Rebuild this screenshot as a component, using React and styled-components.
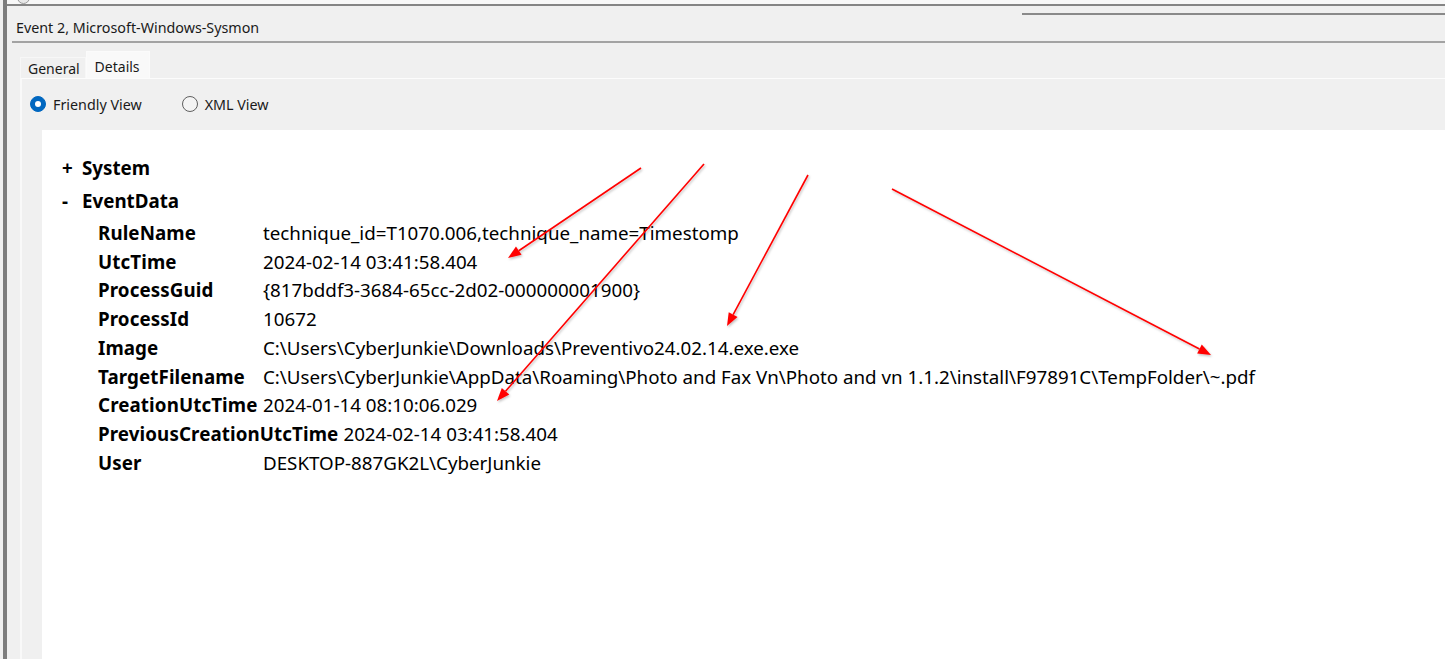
import React from "react";
import styled, { createGlobalStyle } from "styled-components";

const Global = createGlobalStyle`
  html, body { margin: 0; padding: 0; background: #f0f0f0; overflow: hidden; }
  * { box-sizing: border-box; }
`;

const Page = styled.div`
  position: relative;
  width: 1445px;
  height: 659px;
  padding-left: 3px;
  background: #f0f0f0;
  font-family: "Noto Sans", "Open Sans", sans-serif;
  color: #000;
`;

const Window = styled.div`
  height: 100%;
  display: flex;
  flex-direction: column;
  border-left: 4px solid #7d7d7d;
  background: #f0f0f0;
`;

const TopStrip = styled.div`
  height: 6px;
  background: #f8f8f8;
  border-bottom: 2px solid #858585;
  padding-left: 10px;
  overflow: hidden;
  flex: none;
`;

const CutCircle = styled.span`
  display: block;
  width: 13px;
  height: 13px;
  margin-top: -9px;
  border-radius: 50%;
  border: 1px solid #9a9a9a;
  background: #e8e8e8;
`;

const UpperRule = styled.div`
  height: 2px;
  margin: 7px 0 0 1015px;
  background: #8a8a8a;
  flex: none;
`;

const TitleBar = styled.div`
  height: 26px;
  padding: 4px 0 0 9px;
  font-size: 14.3px;
  line-height: 18px;
  color: #1a1a1a;
  flex: none;
`;

const TitleRule = styled.div`
  height: 2px;
  margin-left: 5px;
  background: #a3a3a3;
  flex: none;
`;

const TabStrip = styled.div`
  display: flex;
  align-items: flex-end;
  height: 35px;
  margin-left: 13px;
  flex: none;
`;

const Tab = styled.div`
  height: ${(p) => (p.$active ? "27px" : "21px")};
  padding: ${(p) => (p.$active ? "6px 9px 0 8px" : "2px 5px 0 7px")};
  background: ${(p) => (p.$active ? "#f9f9f9" : "#f0f0f0")};
  border: 1px solid ${(p) => (p.$active ? "#fbfbfb" : "#f7f7f7")};
  border-bottom: none;
  font-size: 14px;
  line-height: 18px;
  color: #1a1a1a;
`;

const TabPanel = styled.div`
  flex: 1;
  display: flex;
  flex-direction: column;
  margin-left: 13px;
  border-top: 1px solid #fcfcfc;
  border-left: 2px solid #f9f9f9;
  min-height: 0;
`;

const RadioRow = styled.div`
  display: flex;
  align-items: center;
  gap: 40px;
  height: 51px;
  padding: 0 0 1px 8px;
  flex: none;
`;

const RadioLabel = styled.label`
  display: flex;
  align-items: center;
  gap: 7px;
  font-size: 14.3px;
  color: #1a1a1a;
`;

const RadioDot = styled.span`
  width: 16px;
  height: 16px;
  border-radius: 50%;
  display: inline-flex;
  align-items: center;
  justify-content: center;
  background: ${(p) => (p.$checked ? "#0067c0" : "#f4f4f4")};
  border: 1px solid ${(p) => (p.$checked ? "#0067c0" : "#5f5f5f")};
  &::after {
    content: "";
    width: 6px;
    height: 6px;
    border-radius: 50%;
    background: #fff;
    display: ${(p) => (p.$checked ? "block" : "none")};
  }
`;

const Content = styled.div`
  flex: 1;
  margin-left: 20px;
  background: #ffffff;
  padding: 21px 0 0 20px;
  font-family: "Noto Sans", "Open Sans", sans-serif;
  font-size: 18.75px;
  min-height: 0;
`;

const Node = styled.div`
  display: flex;
  align-items: center;
  height: 33px;
  font-weight: 700;
`;

const Toggle = styled.span`
  width: 20px;
  font-weight: 700;
`;

const Rows = styled.div`
  padding-left: 36px;
  display: flex;
  flex-direction: column;
  padding-top: 1px;
`;

const Row = styled.div`
  display: flex;
  height: 28.75px;
  align-items: center;
  white-space: nowrap;
`;

const Key = styled.span`
  min-width: 160px;
  margin-right: 5px;
  font-weight: 700;
  letter-spacing: 0.1px;
`;

const Value = styled.span`
  font-weight: 400;
`;

const Overlay = styled.svg`
  position: absolute;
  left: 0;
  top: 0;
  pointer-events: none;
`;

const rows = [
  ["RuleName", "technique_id=T1070.006,technique_name=Timestomp"],
  ["UtcTime", "2024-02-14 03:41:58.404"],
  ["ProcessGuid", "{817bddf3-3684-65cc-2d02-000000001900}"],
  ["ProcessId", "10672"],
  ["Image", "C:\\Users\\CyberJunkie\\Downloads\\Preventivo24.02.14.exe.exe"],
  [
    "TargetFilename",
    "C:\\Users\\CyberJunkie\\AppData\\Roaming\\Photo and Fax Vn\\Photo and vn 1.1.2\\install\\F97891C\\TempFolder\\~.pdf",
  ],
  ["CreationUtcTime", "2024-01-14 08:10:06.029"],
  ["PreviousCreationUtcTime", "2024-02-14 03:41:58.404"],
  ["User", "DESKTOP-887GK2L\\CyberJunkie"],
];

const arrows = [
  [641, 168, 508, 258],
  [704, 164, 497, 401],
  [808, 175, 727, 326],
  [892, 189, 1211, 355],
];

function Arrow({ x1, y1, x2, y2 }) {
  const dx = x2 - x1;
  const dy = y2 - y1;
  const len = Math.hypot(dx, dy);
  const ux = dx / len;
  const uy = dy / len;
  const hl = 13;
  const hw = 5;
  const bx = x2 - ux * hl;
  const by = y2 - uy * hl;
  const p1 = `${bx - uy * hw},${by + ux * hw}`;
  const p2 = `${bx + uy * hw},${by - ux * hw}`;
  return (
    <g>
      <line x1={x1} y1={y1} x2={bx} y2={by} stroke="#ff0000" strokeWidth="1.6" />
      <polygon points={`${x2},${y2} ${p1} ${p2}`} fill="#ff0000" />
    </g>
  );
}

export default function App() {
  return (
    <>
      <Global />
      <Page>
        <Window>
          <TopStrip>
            <CutCircle />
          </TopStrip>
          <UpperRule />
          <TitleBar>Event 2, Microsoft-Windows-Sysmon</TitleBar>
          <TitleRule />
          <TabStrip>
            <Tab>General</Tab>
            <Tab $active>Details</Tab>
          </TabStrip>
          <TabPanel>
            <RadioRow>
              <RadioLabel>
                <RadioDot $checked />
                Friendly View
              </RadioLabel>
              <RadioLabel>
                <RadioDot />
                XML View
              </RadioLabel>
            </RadioRow>
            <Content>
              <Node>
                <Toggle>+</Toggle>
                System
              </Node>
              <Node>
                <Toggle>-</Toggle>
                EventData
              </Node>
              <Rows>
                {rows.map(([k, v]) => (
                  <Row key={k}>
                    <Key>{k}</Key>
                    <Value>{v}</Value>
                  </Row>
                ))}
              </Rows>
            </Content>
          </TabPanel>
        </Window>
        <Overlay width="1445" height="659" viewBox="0 0 1445 659">
          <defs>
            <filter id="sh" x="-10%" y="-10%" width="120%" height="120%">
              <feDropShadow dx="1" dy="1.5" stdDeviation="1" floodColor="#000" floodOpacity="0.25" />
            </filter>
          </defs>
          <g filter="url(#sh)">
            {arrows.map((a, i) => (
              <Arrow key={i} x1={a[0]} y1={a[1]} x2={a[2]} y2={a[3]} />
            ))}
          </g>
        </Overlay>
      </Page>
    </>
  );
}
